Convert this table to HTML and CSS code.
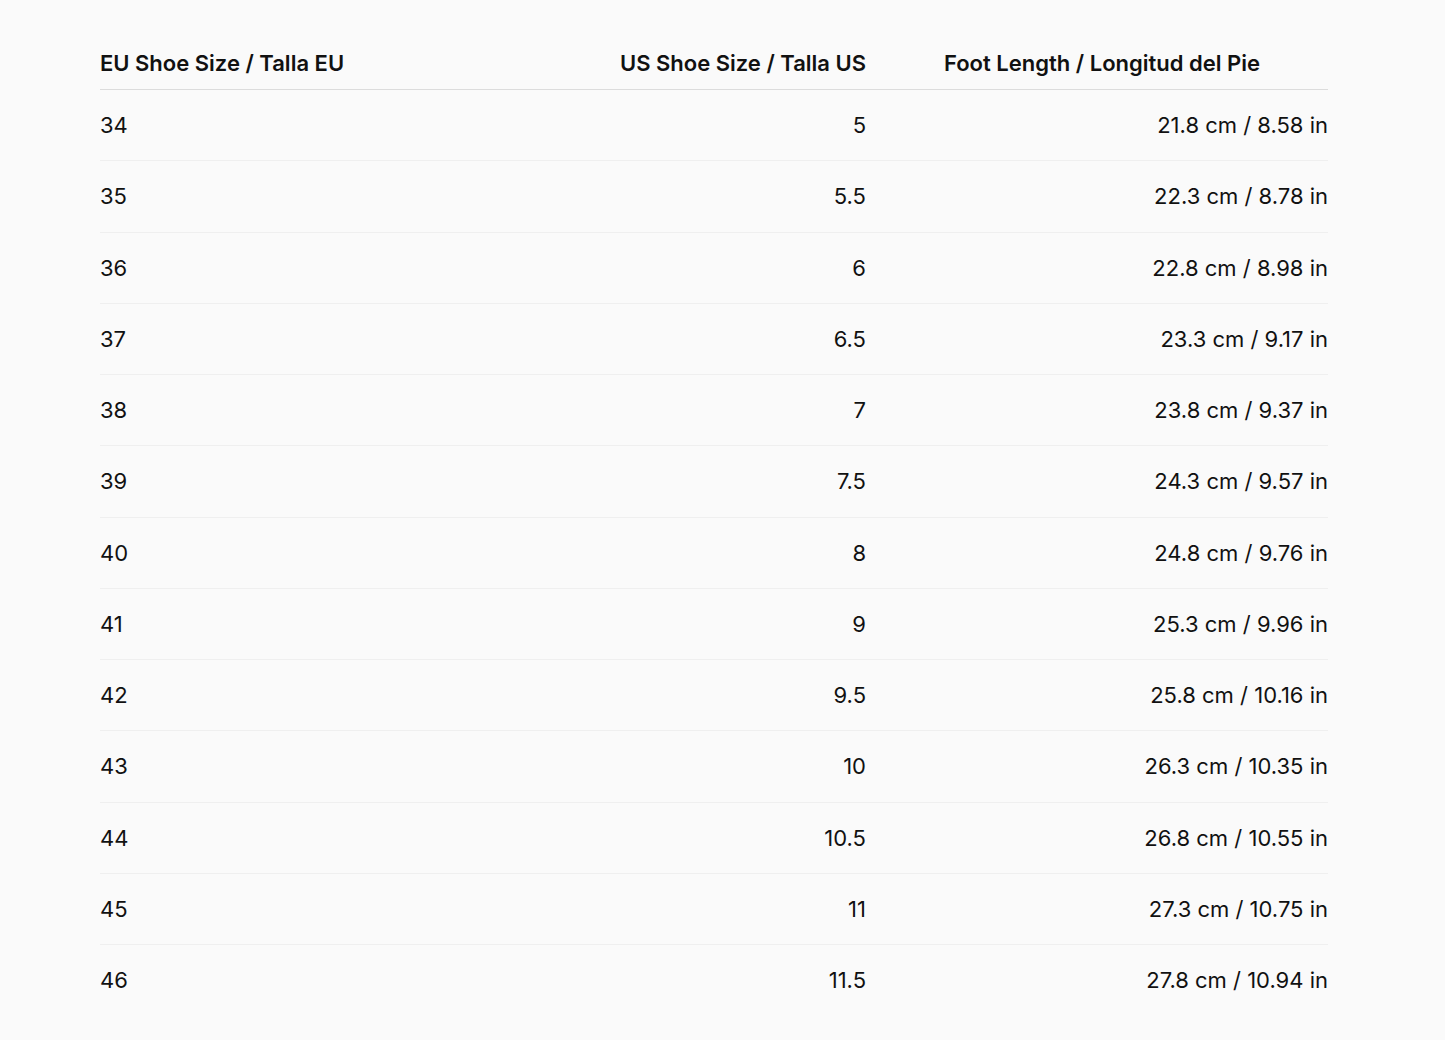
FILE: index.html
```html
<!DOCTYPE html>
<html lang="en">
<head>
    <meta charset="UTF-8">
    <meta name="viewport" content="width=device-width, initial-scale=1.0">
    <title>Size Chart</title>
    <link rel="stylesheet" href="styles.css">
</head>
<body>
    <main class="size-chart">
        <table class="size-table">
            <colgroup>
                <col class="col-eu">
                <col class="col-us">
                <col class="col-foot">
            </colgroup>
            <thead>
                <tr>
                    <th class="left">EU Shoe Size / Talla EU</th>
                    <th class="right">US Shoe Size / Talla US</th>
                    <th class="foot-head">Foot Length / Longitud del Pie</th>
                </tr>
            </thead>
            <tbody>
                <tr><td>34</td><td class="right">5</td><td class="right">21.8 cm / 8.58 in</td></tr>
                <tr><td>35</td><td class="right">5.5</td><td class="right">22.3 cm / 8.78 in</td></tr>
                <tr><td>36</td><td class="right">6</td><td class="right">22.8 cm / 8.98 in</td></tr>
                <tr><td>37</td><td class="right">6.5</td><td class="right">23.3 cm / 9.17 in</td></tr>
                <tr><td>38</td><td class="right">7</td><td class="right">23.8 cm / 9.37 in</td></tr>
                <tr><td>39</td><td class="right">7.5</td><td class="right">24.3 cm / 9.57 in</td></tr>
                <tr><td>40</td><td class="right">8</td><td class="right">24.8 cm / 9.76 in</td></tr>
                <tr><td>41</td><td class="right">9</td><td class="right">25.3 cm / 9.96 in</td></tr>
                <tr><td>42</td><td class="right">9.5</td><td class="right">25.8 cm / 10.16 in</td></tr>
                <tr><td>43</td><td class="right">10</td><td class="right">26.3 cm / 10.35 in</td></tr>
                <tr><td>44</td><td class="right">10.5</td><td class="right">26.8 cm / 10.55 in</td></tr>
                <tr><td>45</td><td class="right">11</td><td class="right">27.3 cm / 10.75 in</td></tr>
                <tr><td>46</td><td class="right">11.5</td><td class="right">27.8 cm / 10.94 in</td></tr>
            </tbody>
        </table>
    </main>
</body>
</html>
```

FILE: styles.css
```css
/* Page */
body, html {
    margin: 0;
    padding: 0;
    background: #fafafa;
    color: #111;
    font-family: Inter, "Noto Sans", sans-serif;
}

.size-chart {
    padding: 37px 0 0 100px;
}

.size-table {
    width: 1228px;
    table-layout: fixed;
    border-collapse: collapse;
    font-size: 22px;
}

.col-eu { width: 400px; }
.col-us { width: 366px; }
.col-foot { width: 462px; }

.size-table th {
    height: 52px;
    padding: 0;
    font-weight: 600;
    text-align: left;
    vertical-align: middle;
    border-bottom: 1px solid #dcdcdc;
}

.size-table td {
    height: 70.25px;
    padding: 0;
    vertical-align: middle;
    border-bottom: 1px solid #efefef;
}

.size-table tbody tr:last-child td {
    border-bottom: none;
}

.size-table .right {
    text-align: right;
}

.size-table .foot-head {
    padding-left: 78px;
}
```
